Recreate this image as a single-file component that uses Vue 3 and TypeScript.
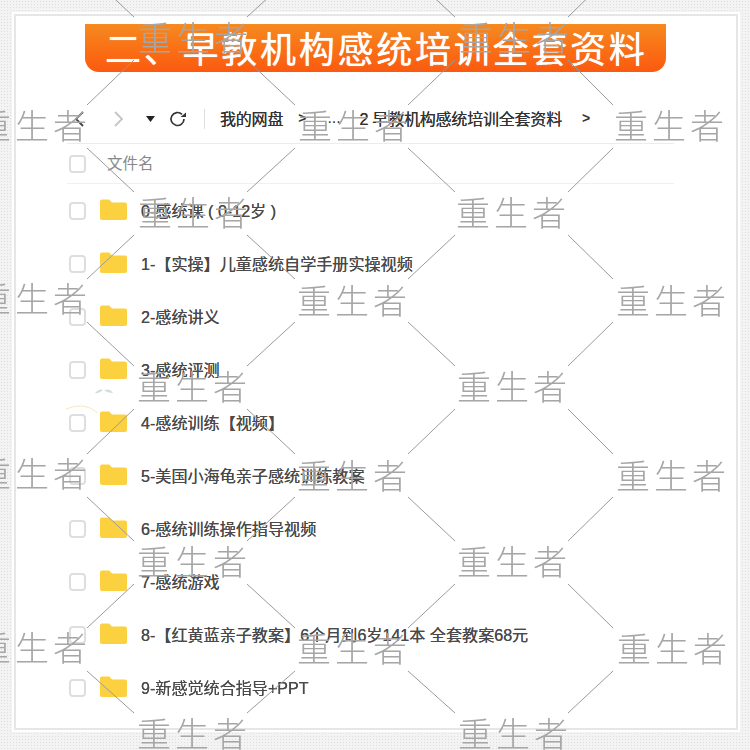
<script setup lang="ts">
const files: string[] = [
  '0-感统课 ( 0-12岁 )',
  '1-【实操】儿童感统自学手册实操视频',
  '2-感统讲义',
  '3-感统评测',
  '4-感统训练【视频】',
  '5-美国小海龟亲子感统训练教案',
  '6-感统训练操作指导视频',
  '7-感统游戏',
  '8-【红黄蓝亲子教案】6个月到6岁141本 全套教案68元',
  '9-新感觉统合指导+PPT',
]

interface Mark { x: number; y: number }
const marks: Mark[] = [
  { x: 194, y: 37 }, { x: 515, y: 37 },
  { x: 33, y: 125 }, { x: 354, y: 125 }, { x: 670, y: 125 },
  { x: 194, y: 212 }, { x: 512, y: 212 },
  { x: 33, y: 298 }, { x: 353, y: 300 }, { x: 672, y: 300 },
  { x: 193, y: 386 }, { x: 513, y: 386 },
  { x: 33, y: 473 }, { x: 353, y: 475 }, { x: 672, y: 475 },
  { x: 193, y: 561 }, { x: 513, y: 561 },
  { x: 33, y: 647 }, { x: 353, y: 648 }, { x: 673, y: 648 },
  { x: 193, y: 733 }, { x: 514, y: 733 },
]

interface Seg { x1: number; y1: number; x2: number; y2: number }
const segs: Seg[] = []
const ys: number[] = [-50, 37, 125, 212, 299, 386, 474, 561, 648, 733, 820]
const colA: number[] = [193, 514]
const colB: number[] = [33, 354, 672]
for (let i = 0; i < ys.length - 1; i++) {
  const top = ys[i]
  const bottom = ys[i + 1]
  const topCols = i % 2 === 1 ? colA : colB
  const botCols = i % 2 === 1 ? colB : colA
  for (const a of topCols) {
    for (const b of botCols) {
      if (Math.abs(a - b) > 170) continue
      const right = b > a
      segs.push({
        x1: a + (right ? 54 : -59),
        y1: top + 23,
        x2: b + (right ? -59 : 54),
        y2: bottom - 20,
      })
    }
  }
}
</script>

<template>
  <div class="page">
    <div class="sheet">
      <div class="banner">二、早教机构感统培训全套资料</div>
      <div class="list">
        <div class="toolbar">
          <svg class="nav" width="14" height="20" viewBox="0 0 14 20"><path d="M11 3 4 10l7 7" fill="none" stroke="#444" stroke-width="1.8" /></svg>
          <svg class="nav fwd" width="14" height="20" viewBox="0 0 14 20"><path d="M3 3l7 7-7 7" fill="none" stroke="#c4c4c4" stroke-width="1.8" /></svg>
          <svg class="caret" width="10" height="6" viewBox="0 0 10 6"><path d="M0 0h9L4.500 6z" fill="#222" /></svg>
          <svg class="refresh" width="20" height="20" viewBox="0 0 20 20"><path d="M16 10a6.500 6.500 0 1 1-2-4.700" fill="none" stroke="#333" stroke-width="1.700" /><path d="M12.500 8h5.500V3.500z" fill="#333" /></svg>
          <span class="sep"></span>
          <span class="crumb home">我的网盘</span>
          <span class="arrow first">&gt;</span>
          <span class="dots">...</span>
          <span class="crumb path">2 早教机构感统培训全套资料</span>
          <span class="arrow last">&gt;</span>
        </div>
        <div class="head">
          <span class="check"></span>
          <span class="head-name">文件名</span>
        </div>
        <div v-for="f in files" :key="f" class="row">
          <span class="check"></span>
          <svg class="folder" width="27" height="21" viewBox="0 0 28 21" preserveAspectRatio="none"><path d="M0 2.500A2 2 0 0 1 2 .5h7.500l3 3H26a2 2 0 0 1 2 2V19a2 2 0 0 1-2 2H2a2 2 0 0 1-2-2z" fill="#fbd13f" /></svg>
          <span class="name">{{ f }}</span>
        </div>
      </div>
    </div>
    <svg class="lines" width="750" height="750" viewBox="0 0 750 750">
      <line v-for="(s, i) in segs" :key="i" :x1="s.x1" :y1="s.y1" :x2="s.x2" :y2="s.y2" stroke="#9a9a9a" stroke-width="1" />
      <path d="M95 393q4-5 8-3-4 4-8 3zM104 390q6-2 9 3-6 0-9-3z" fill="#cfe0d8" />
      <path d="M66 409q18-8 32 4" fill="none" stroke="#f6e7bd" stroke-width="1" />
    </svg>
    <span
      v-for="(m, i) in marks"
      :key="'m' + i"
      class="mark"
      :style="{ left: m.x - 59 + 'px', top: m.y - 24 + 'px' }"
    >重生者</span>
  </div>
</template>

<style>
html, body { margin: 0; padding: 0; background: #fff; }
</style>

<style scoped>
.page {
  position: relative;
  width: 750px;
  height: 750px;
  overflow: hidden;
  box-sizing: border-box;
  padding: 14px 12px 20px 14px;
  background-color: #f3f3f3;
  background-image: radial-gradient(#dedede 0.8px, transparent 1px);
  background-size: 3px 3px;
  font-family: "Liberation Sans", "Noto Sans CJK SC", sans-serif;
}
.sheet {
  box-sizing: border-box;
  height: 100%;
  padding: 8px 0 0 51px;
  background: #fff;
  border: 2px solid #e6e6e6;
  outline: 2px solid #fff;
  display: flex;
  flex-direction: column;
  filter: blur(0.45px);
}
.banner {
  box-sizing: border-box;
  margin-left: 18px;
  width: 581px;
  height: 48px;
  padding-left: 20px;
  border-radius: 0 0 14px 14px;
  background: linear-gradient(#f68a20, #fa6c14 60%, #fb5a10);
  color: #fff;
  font-size: 36px;
  letter-spacing: 2.75px;
  line-height: 53px;
  white-space: nowrap;
  overflow: hidden;
  text-shadow: 0 0 0.7px #fff;
}
.list {
  width: 607px;
  margin-top: 23px;
  display: flex;
  flex-direction: column;
}
.toolbar {
  display: flex;
  align-items: center;
  height: 48px;
  border-bottom: 1px solid #ececec;
  color: #333;
  font-size: 16px;
}
.nav { margin-left: 5px; flex: none; }
.fwd { margin-left: 26px; }
.caret { margin-left: 20px; flex: none; }
.refresh { margin-left: 12px; flex: none; }
.sep { width: 1px; height: 20px; margin-left: 16px; background: #ddd; }
.crumb {
  white-space: nowrap;
  letter-spacing: -0.2px;
  margin-top: -3px;
  text-shadow: 0 0 0.4px #333;
}
.home { margin-left: 15px; }
.arrow { font-weight: 700; font-size: 14px; margin-top: -3px; }
.first { margin-left: 15px; }
.dots { margin-left: 21px; width: 32px; margin-top: -3px; }
.last { margin-left: 20px; }
.head {
  display: flex;
  align-items: center;
  height: 39px;
  border-bottom: 1px solid #f0f0f0;
}
.head-name { margin: -3px 0 0 21px; color: #888; font-size: 15.500px; }
.row {
  display: flex;
  align-items: center;
  height: 53px;
}
.check {
  box-sizing: border-box;
  flex: none;
  width: 17px;
  height: 18px;
  margin-left: 2px;
  border: 2px solid #dedede;
  border-radius: 4px;
}
.folder { flex: none; margin: -2px 0 0 14px; }
.name {
  margin: -2px 0 0 14px;
  color: #4a4a4a;
  font-size: 16.100px;
  white-space: nowrap;
  text-shadow: 0 0 0.4px #444;
}
.lines {
  position: absolute;
  left: 0;
  top: 0;
  pointer-events: none;
}
.mark {
  position: absolute;
  width: 120px;
  text-align: center;
  color: #a6a6a6;
  font-family: "Noto Sans CJK SC", sans-serif;
  font-weight: 300;
  font-size: 34px;
  letter-spacing: 4px;
  line-height: 48px;
  white-space: nowrap;
}
</style>
